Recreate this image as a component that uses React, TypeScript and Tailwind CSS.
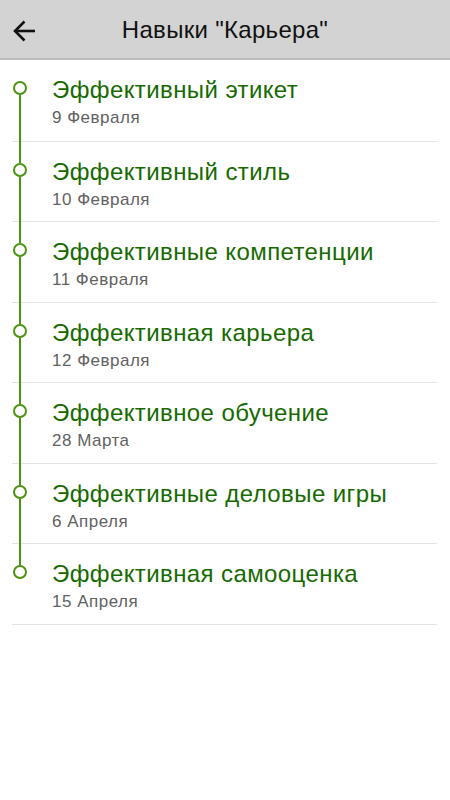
import React from "react";

const items = [
  { title: "Эффективный этикет", date: "9 Февраля", h: "h-[82px]" },
  { title: "Эффективный стиль", date: "10 Февраля", h: "h-[80px]" },
  { title: "Эффективные компетенции", date: "11 Февраля", h: "h-[81px]" },
  { title: "Эффективная карьера", date: "12 Февраля", h: "h-[80px]" },
  { title: "Эффективное обучение", date: "28 Марта", h: "h-[81px]" },
  { title: "Эффективные деловые игры", date: "6 Апреля", h: "h-[80px]" },
  { title: "Эффективная самооценка", date: "15 Апреля", h: "h-[81px]" },
];

export default function App() {
  return (
    <div className="w-[450px] h-[800px] bg-white" style={{ fontFamily: "'Liberation Sans', Arial, sans-serif" }}>
      <div className="relative h-[60px] bg-[#d3d3d3] border-b-2 border-[#bcbcbc] flex items-center justify-center">
        <svg className="absolute left-[12px] top-[19px]" width="24" height="24" viewBox="0 0 24 24" fill="none" stroke="#111" strokeWidth="2.6" strokeLinecap="butt" strokeLinejoin="miter">
          <path d="M23 12H3" />
          <path d="M12.5 2.5L3 12l9.5 9.5" />
        </svg>
        <span className="text-[24px] tracking-[0.3px] text-[#111] leading-none mt-[2px]">Навыки "Карьера"</span>
      </div>
      <div>
        {items.map((it, i) => (
          <div key={i} className={`relative flex ${it.h}`}>
            <div className="w-10 flex flex-col items-center relative z-10">
              <div className={`w-[2px] h-[21px] ${i === 0 ? "bg-transparent" : "bg-[#4a940f]"}`} />
              <div className="w-[14px] h-[14px] rounded-full border-2 border-[#4a940f] bg-white" />
              <div className={`w-[2px] flex-1 ${i === items.length - 1 ? "bg-transparent" : "bg-[#4a940f]"}`} />
            </div>
            <div className="flex-1 pl-3 pt-[16px]">
              <div className="text-[24px] tracking-[0.4px] leading-[28px] text-[#166a00]">{it.title}</div>
              <div className="text-[17px] tracking-[0.5px] leading-[20px] text-[#626262] mt-[4px]">{it.date}</div>
            </div>
            <div className="absolute bottom-0 left-3 right-[13px] h-px bg-[#e3e3e3]" />
          </div>
        ))}
      </div>
    </div>
  );
}
